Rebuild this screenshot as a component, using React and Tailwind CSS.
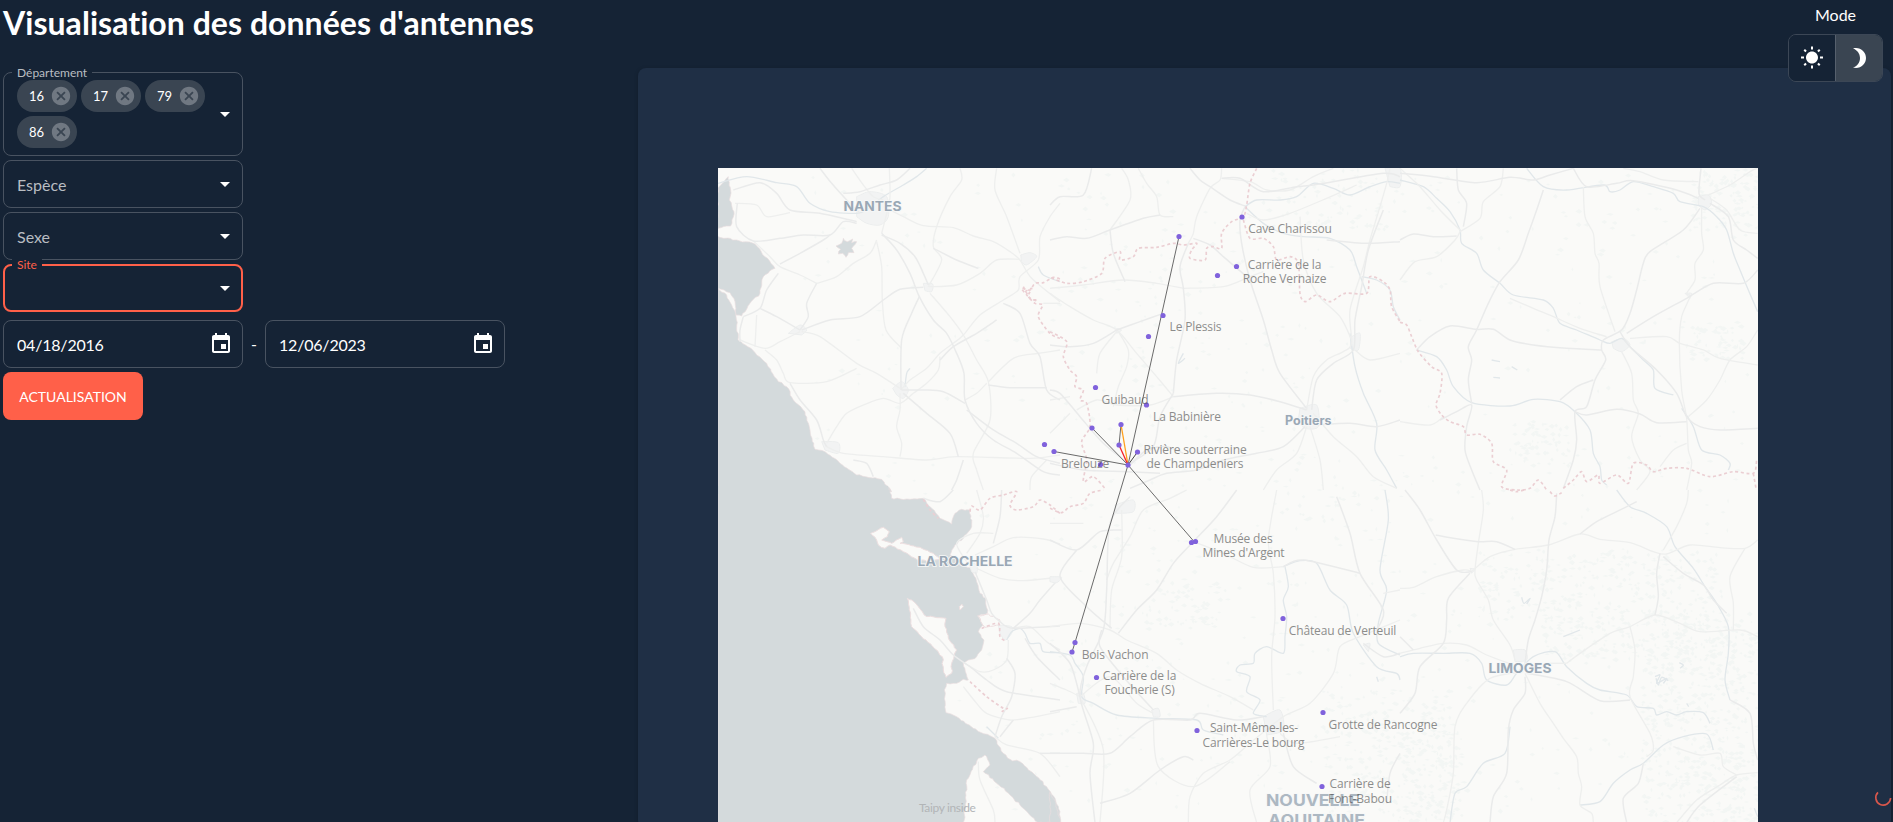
import React from "react";

const ICONS = {
  arrow: "M7 10l5 5 5-5z",
  cancel:
    "M12 2C6.47 2 2 6.47 2 12s4.47 10 10 10 10-4.47 10-10S17.53 2 12 2zm5 13.59L15.59 17 12 13.41 8.41 17 7 15.59 10.59 12 7 8.41 8.41 7 12 10.59 15.59 7 17 8.41 13.41 12 17 15.59z",
  event:
    "M17 12h-5v5h5v-5zM16 1v2H8V1H6v2H5c-1.11 0-1.99.9-1.99 2L3 19c0 1.1.89 2 2 2h14c1.1 0 2-.9 2-2V5c0-1.1-.9-2-2-2h-1V1h-2zm3 18H5V8h14v11z",
  sun: "M6.76 4.84l-1.8-1.79-1.41 1.41 1.79 1.79 1.42-1.41zM4 10.5H1v2h3v-2zm9-9.95h-2V3.5h2V.55zm7.45 3.91l-1.41-1.41-1.79 1.79 1.41 1.41 1.79-1.79zm-3.21 13.7l1.79 1.8 1.41-1.41-1.8-1.79-1.4 1.4zM20 10.5v2h3v-2h-3zm-8-5c-3.31 0-6 2.69-6 6s2.69 6 6 6 6-2.69 6-6-2.69-6-6-6zm-1 16.95h2V19.5h-2v2.95zm-7.45-3.91l1.41 1.41 1.79-1.8-1.41-1.41-1.79 1.8z",
  moon: "M9 2c-1.05 0-2.05.16-3 .46 4.06 1.27 7 5.06 7 9.54 0 4.48-2.94 8.27-7 9.54.95.3 1.95.46 3 .46 5.52 0 10-4.48 10-10S14.52 2 9 2z",
};

function Icon({ name, className = "size-6" }) {
  return (
    <svg viewBox="0 0 24 24" fill="currentColor" className={`shrink-0 ${className}`}>
      <path d={ICONS[name]} />
    </svg>
  );
}

function Chip({ children }) {
  return (
    <div className="flex h-8 w-[60px] items-center justify-between rounded-full bg-[#3a4552] pl-3 pr-[5px] text-[13px]">
      <span className="pt-px">{children}</span>
      <Icon name="cancel" className="size-[22px] text-[#707882]" />
    </div>
  );
}

function Select({ label, floating, focused, chips }) {
  return (
    <div
      className={`relative flex w-60 items-center rounded-lg ${
        focused ? "border-2 border-[#ff6049] pl-3 pr-1" : "border border-[#495361] pl-[13px] pr-[5px]"
      } ${chips ? "h-[84px]" : "h-12"}`}
    >
      {floating && (
        <span
          className={`absolute bg-[#152335] px-[5px] text-[12px] leading-3 ${
            focused ? "-top-[7px] left-[7px] text-[#ff6049]" : "-top-[6px] left-[8px] text-[#b9bdc2]"
          }`}
        >
          {label}
        </span>
      )}
      <div className="flex flex-1 flex-wrap gap-1 text-base">
        {chips && chips.map((c) => <Chip key={c}>{c}</Chip>)}
        {!floating && <span className="pt-px text-[#b9bdc2]">{label}</span>}
      </div>
      <Icon name="arrow" />
    </div>
  );
}

function DateField({ value }) {
  return (
    <div className="flex h-12 w-60 items-center justify-between rounded-lg border border-[#495361] pl-[13px] pr-[9px] text-base">
      <span className="pt-px tracking-[-0.2px]">{value}</span>
      <Icon name="event" />
    </div>
  );
}

/* Catmull-Rom curve through a list of "x,y" pairs. */
function curve(s) {
  const p = s.trim().split(/\s+/).map((q) => q.split(",").map(Number));
  let d = `M${p[0]}`;
  for (let i = 0; i < p.length - 1; i++) {
    const a = p[i - 1] || p[i];
    const b = p[i];
    const c = p[i + 1];
    const e = p[i + 2] || c;
    d += `C${b[0] + (c[0] - a[0]) / 7},${b[1] + (c[1] - a[1]) / 7} ${c[0] - (e[0] - b[0]) / 7},${c[1] - (e[1] - b[1]) / 7} ${c}`;
  }
  return d;
}

function rng(seed) {
  let s = seed;
  return () => {
    s = (s * 1664525 + 1013904223) % 4294967296;
    return s / 4294967296;
  };
}

/* Closed outline with small irregular notches, for coasts. */
function coast(s) {
  const r = rng(5);
  const p = s.trim().split(/\s+/).map((q) => q.split(",").map(Number));
  let d = `M${p[0]}`;
  for (let i = 0; i < p.length; i++) {
    const a = p[i];
    const b = p[(i + 1) % p.length];
    const len = Math.hypot(b[0] - a[0], b[1] - a[1]);
    const n = len > 130 ? 1 : Math.max(1, Math.round(len / 9));
    for (let k = 1; k <= n; k++) {
      const j = k === n ? 0 : 5;
      d += `L${(a[0] + ((b[0] - a[0]) * k) / n + (r() - 0.5) * j).toFixed(1)},${(a[1] + ((b[1] - a[1]) * k) / n + (r() - 0.5) * j).toFixed(1)}`;
    }
  }
  return d + "Z";
}

/* Small woodland flecks: [x, y, w, h, count] areas in page pixels. */
const WOODS = [
  [800, 172, 500, 640, 330],
  [1060, 172, 690, 640, 600],
  [1270, 170, 130, 60, 90],
  [1300, 480, 100, 60, 30],
  [1690, 170, 68, 60, 130],
  [1320, 690, 130, 132, 320],
  [1400, 730, 60, 90, 120],
  [1540, 550, 180, 110, 400],
  [1640, 610, 118, 130, 350],
  [1640, 740, 118, 82, 250],
  [1680, 320, 60, 40, 70],
  [1510, 420, 60, 50, 70],
  [1475, 550, 70, 70, 80],
  [1140, 580, 80, 50, 60],
];
const SPECKS = (() => {
  const r = rng(17);
  let d = "";
  WOODS.forEach(([x, y, w, h, n]) => {
    for (let i = 0; i < n; i++) {
      const px = x + r() * w;
      const py = y + r() * h;
      const a = 1 + r() * 3.2;
      const b = 0.8 + r() * 1.8;
      d += `M${px.toFixed(1)},${py.toFixed(1)}l${a.toFixed(1)},${(-b).toFixed(1)}l${(a * 0.8).toFixed(1)},${b.toFixed(1)}l${(-a * 0.7).toFixed(1)},${b.toFixed(1)}z`;
    }
  });
  return d;
})();

/* Every tile holds its geometry at three units per page pixel. */
const TILES = [
  {
    at: [710, 160],
    water: [
      "24,84 55,50 62,90 58,120 72,155 62,198 24,205",
      "24,230 80,240 135,252 165,290 195,325 160,350 150,400 120,430 95,468 78,465 75,425 60,398 24,385",
      "24,385 50,405 65,435 78,470 84,540 130,572 170,610 205,665 230,680 250,720 285,755 300,810 315,868 345,875 390,910 440,945 515,958 545,995 24,995",
      "378,258 395,250 400,235 412,245 428,237 425,248 440,245 425,265 432,278 415,278 408,292 398,280 385,282 392,268",
    ],
    town: [
      "440,110 480,95 530,110 535,170 510,195 470,190 440,170",
      "932,285 960,278 980,290 950,315 935,305",
      "548,685 575,665 595,690 580,715 560,705",
      "235,520 270,495 290,510 275,525",
      "640,370 668,372 665,395 645,392",
      "335,845 385,848 385,880 345,870",
    ],
    road: [
      "330,25 365,70 410,120 450,160", "425,25 460,75 490,110 520,120",
      "400,100 450,95 510,75 560,60 600,25", "538,25 540,110 530,160 515,220",
      "515,220 560,270 600,340 628,410 670,480 710,520 740,580 762,640 765,720 800,790 850,840 920,880 1000,935 1050,945",
      "520,140 580,170 640,197 730,203 790,228 850,245 900,275 930,300 965,355 1050,425",
      "515,225 570,250 615,290 640,340 655,375",
      "500,245 515,320 517,420 528,510 575,565",
      "628,410 605,460 575,540 573,690",
      "573,690 600,660 650,625 690,580 730,550 760,525 810,465 880,420 925,390 930,350 985,300 990,230 1020,170 1050,130",
      "70,90 150,68 200,100 240,150 330,160 440,185", "75,130 140,135 170,170 240,158",
      "440,190 400,185 360,225 280,225 210,235 130,243 80,200 82,130",
      "130,243 180,290 210,320 270,345 320,370", "210,312 270,280 340,240 360,225",
      "320,370 380,350 430,310 480,280 500,240", "320,370 290,430 295,470 270,510",
      "275,515 330,530 440,610 500,640 570,685", "275,510 360,480 450,470 520,420 570,388 640,382",
      "655,380 740,375 810,340 860,300 930,298", "670,265 740,300 805,325", "655,380 695,300 670,260 680,200 720,110 755,60 750,25",
      "150,445 200,470 270,510", "270,515 210,545 165,565 90,540", "100,470 90,510 90,545", "140,465 135,560",
      "205,340 170,390 150,445 100,470", "165,570 200,600 220,640 240,668 350,665 440,625",
      "240,670 270,720 320,780 340,840 350,860", "350,850 380,800 410,760 460,735 520,715 570,730 610,700 650,670 685,630 690,590",
      "575,690 640,690 700,695 765,730", "570,700 570,750 560,800 575,850 570,890", "580,700 650,760 720,820 745,890",
      "350,860 400,880 520,890 650,900 740,890 960,895 1050,885", "430,900 470,910 490,950",
      "660,400 720,470 760,525 800,600 835,665 840,780 790,880 800,930 820,990",
      "880,430 930,460 960,550 990,590 1010,690 1050,720", "835,665 910,595 985,580 1050,570",
      "835,675 900,683 1010,683", "765,720 800,700 830,670", "770,750 850,810 920,850 980,890 1050,910",
      "860,25 855,90 890,170 930,280", "760,900 740,960 725,990", "960,990 965,950 1010,900", "860,480 800,520 730,560 690,600", "1050,430 1000,430",
    ],
    river: ["24,70 110,50 200,68 260,80 300,130 360,155 440,160 470,150 520,110 580,75 620,50 650,25", "585,680 590,640 600,625", "985,320 1000,345 1050,365"],
    border: ["1050,357 1030,352 1000,368 975,370 960,390 935,385 950,405 975,430 998,435 985,470 1020,520 1050,535", "940,380 960,415 980,420", "945,395 965,385 955,410 985,425"],
  },
  {
    at: [1050, 160],
    town: ["750,745 800,735 805,800 765,805 745,780", "1005,25 1050,25 1050,80 1020,80", "905,530 930,520 925,570 900,565", "200,505 215,510 200,520"],
    road: [
      "0,135 30,110 100,105 125,25", "265,25 290,70 320,110 330,165 370,170", "420,25 450,60 480,80 540,120 585,138",
      "515,55 600,65 650,90 720,90 790,50 850,25", "515,55 570,55 640,95 740,80 790,75 1000,40 1050,50", "515,25 510,60 480,85 440,170 430,220 415,250",
      "0,240 50,230 110,235 180,210 280,175 330,165", "180,210 240,120 235,60 215,25", "180,210 190,280 225,365",
      "0,385 100,375 220,360 320,370 400,385", "585,140 570,180 575,250 600,360 640,480 665,570 690,640 770,745",
      "590,160 640,180 720,160 830,115 920,75", "415,250 390,320 400,385 405,480 380,600 370,700",
      "400,385 520,380 600,350 640,335", "430,235 480,255 520,290 590,350", "0,400 60,440 130,480 200,510 260,580 320,650 370,710",
      "200,510 130,550 60,560 0,555", "200,515 150,580 140,640", "200,510 270,485 340,460", "205,515 235,570 230,620 205,680 190,740",
      "370,710 500,700 600,705 690,725 770,750", "370,710 300,735 200,735 140,720 80,750", "370,700 330,770 310,860 240,910",
      "770,750 790,650 830,600 880,575 905,550 900,450 940,320 960,240 990,140 1010,70 1020,25", "785,750 800,660 850,610 910,570 915,480 935,380 955,270 1000,150",
      "750,170 760,300 800,400 870,470 905,540", "830,240 950,250 1050,245", "790,760 850,830 920,890 970,950 1040,985", "800,795 900,790 980,800 1050,780",
      "770,800 740,880 680,930 640,990", "765,800 700,860 620,880 520,900 440,930 350,940 300,960 240,985", "780,800 810,900 820,990",
      "0,910 100,930 230,935 330,940", "60,710 0,720", "240,915 290,870 350,860 400,880", "0,820 60,760", "240,915 160,850 90,770 30,700 0,690", "915,570 960,600 1050,580",
    ],
    river: [
      "1050,70 1010,65 960,80 900,105 850,85 790,70 740,110 690,120 620,120 585,140",
      "585,140 640,190 700,220 760,230 840,235 900,270 920,320 950,400", "900,520 915,620 940,700 980,790 975,870 1010,930 1040,985", "400,580 385,610 405,595", "935,350 980,360 1020,390 1030,440 1050,480",
    ],
    border: [
      "620,25 600,70 590,135 580,170 545,185 515,220 515,265 490,260 470,265 465,300 420,295 425,270 440,250 400,255 370,250 320,262 265,265 250,290 210,300 210,275 165,295 155,340 100,365 50,370 0,352",
      "580,180 600,235 640,235 670,260 680,300 720,290 745,310 750,400 765,425 800,405 840,425 885,400 950,400 960,350 1000,365 1020,390 1025,440 1050,485",
      "0,515 50,545 40,590 60,630 80,650 75,680 100,690 90,720 110,730 120,800 95,845 110,900 100,965 130,950 165,985",
    ],
  },
  {
    at: [1400, 160],
    town: ["635,545 670,535 690,555 665,575 640,565", "895,110 925,105 935,130 915,150 895,135", "855,400 875,400 870,415"],
    road: [
      "0,40 100,50 230,68 330,52 400,60 450,45 520,25", "0,25 60,80 120,150 180,210", "170,25 175,90 200,130 190,200",
      "310,25 300,80 250,125 240,175 180,215", "0,240 40,222 100,230 170,228", "0,360 45,305 110,290 165,240 180,215",
      "430,90 410,150 385,220 355,300 300,365 265,430 230,510 205,560 215,600 205,660 215,730",
      "550,80 555,170 580,220 585,280 597,310 600,380 645,515", "520,25 560,80 650,70 700,62 830,90 895,115",
      "670,25 720,35 790,60 895,65", "903,25 897,100 915,120", "925,105 990,75 1050,35 1073,25",
      "900,145 850,210 750,275 730,310 710,390 690,460 665,510 610,540 605,570 617,600 585,660 560,740 525,755 530,840 520,900 490,985",
      "905,140 905,220 910,270 885,310 885,360 860,400 870,410 845,470 838,550 845,690 860,775 865,870 875,910 860,990",
      "680,520 760,470 860,415 940,370 1030,370 1073,330", "690,535 800,530 840,550 910,570 960,595 1073,615",
      "930,130 985,170 1000,240 1040,270 1073,295", "930,115 980,150 1020,210 1073,220", "50,570 90,530 150,498 230,508 280,508 330,540 400,555 500,565 605,570",
      "330,415 400,445 460,470 540,505 620,530", "660,515 690,560 770,630 830,700 860,770 900,800 960,810 1073,805",
      "665,575 695,640 700,720 715,760 695,830 720,900 750,935 710,990", "525,755 560,765 650,748 720,762 770,788 860,785",
      "865,770 920,720 960,660 990,600 1040,560 1073,510", "120,780 170,755 215,735 200,800 195,870 215,930 240,990", "0,785 90,795 130,770", "480,720 530,680 580,660", "860,850 820,870 780,920",
    ],
    river: [
      "0,60 70,80 110,115 150,155 180,210 185,250 230,280 250,330 300,370 340,405 430,420 460,445 480,490 530,510 600,540 630,550 665,535 690,560 730,600 760,630 765,685 820,705",
      "380,25 430,80 500,90 610,75 630,95 660,90 700,65 760,80 820,100 840,125 910,140 950,170 980,210 1000,280 1020,330 1045,390 1073,455",
      "50,570 110,590 140,630 160,680 215,728 330,738 400,718 480,725 525,755 570,810 580,880 600,920 605,960 620,975",
      "845,745 880,800 905,870 960,885 990,910 985,930", "275,600 300,605", "335,620 352,630", "280,652 300,654",
    ],
    border: [
      "0,487 20,495 35,530 55,575 95,620 125,640 120,700 108,735 125,765 150,785 190,800 200,825 240,823 275,850 280,905 320,930 305,980 350,990 390,985 415,960 440,990",
      "490,985 520,960 545,935 560,965 595,945 600,970 650,945 685,970 700,910 740,915 760,935 800,925 860,925 930,950 1000,935 1060,940 1070,900", "1060,940 1068,985",
    ],
  },
  {
    at: [710, 490],
    water: [
      "24,-3 540,-3 545,25 600,28 640,25 665,55 690,85 725,102 735,70 755,58 780,60 785,110 760,145 735,165 720,195 760,220 785,240 800,275 810,310 828,325 832,370 805,378 820,405 805,425 822,450 815,480 800,500 760,520 775,570 760,568 740,580 710,580 703,600 708,668 740,680 790,715 855,745 880,790 900,808 930,815 970,850 1010,890 1035,925 1050,965 1050,998 985,998 930,945 900,915 860,880 820,845 840,825 825,795 805,805 770,870 765,960 760,998 24,998",
    ],
    land: [
      "482,130 520,112 538,125 532,140 515,150 545,160 575,142 580,155 570,160 630,172 670,190 690,205 660,215 620,208 580,185 540,165 525,175 505,165 500,150",
      "592,325 605,330 625,350 650,380 708,385 705,410 715,445 740,480 725,520 725,550 708,562 700,540 697,500 680,480 635,440 605,410 602,370",
      "803,378 835,372 870,390 865,405 825,412", "748,350 756,343 760,350 750,360",
    ],
    town: ["775,215 800,225 800,250 785,245", "865,405 905,410 905,430 885,450 870,430"],
    road: [
      "640,25 690,35 730,0", "800,0 820,80 810,130 770,190", "875,0 870,80 850,160", "795,195 850,170 910,143 1000,147 1050,162",
      "795,245 830,330 845,370 870,395 910,415 1050,408", "800,235 870,265 940,272 1050,262", "1050,262 990,330 960,370 910,415",
      "770,215 740,160 790,130 850,130", "610,355 640,410 690,450 730,495 780,530 830,570 890,605 1050,630", "765,520 810,545 850,540 890,510 895,450",
      "890,505 915,550 905,620 875,680 855,740", "760,590 800,640 830,670 900,690 960,683 1050,665", "870,740 910,690", "855,740 890,765 990,790 1050,860", "945,445 980,500 1050,570",
      "805,815 810,870 850,960 855,998", "990,790 1050,790", "910,415 960,410 1010,455 1050,480",
    ],
    river: ["890,450 905,425 930,415 945,430 960,460 990,460 1000,485 1050,488", "830,710 865,745"],
    border: ["780,65 785,48 810,60 840,25 880,15 920,5 900,45 920,60 970,50 990,30 1020,45 1050,70", "640,28 660,60 685,85", "780,575 830,620 880,655 892,655 875,665", "815,415 865,400 870,440 890,455"],
  },
  {
    at: [1050, 490],
    water: ["0,905 18,940 32,998 0,998"],
    town: ["195,45 250,30 250,65 200,70", "80,610 100,610 105,640 85,640", "305,660 325,655 330,680 310,680", "640,680 690,660 700,720 650,735", "0,260 35,262 20,278 0,275", "940,465 960,460 955,485"],
    road: [
      "240,20 180,100 170,300 160,420 110,530 90,620 130,760 120,850 135,998", "215,60 215,200 185,300 180,415", "0,150 80,180 150,125 215,120",
      "410,0 360,25 280,60 240,140 190,220 170,270", "80,180 30,260 110,350 185,415", "0,410 90,400 180,420 230,450 320,490 380,540 450,580 540,620 610,660",
      "560,0 500,80 430,155 370,220 320,300 260,360 205,430", "430,155 520,190 610,232 700,230", "700,230 760,210 930,250",
      "680,0 655,150 670,250 675,380 665,500 670,660", "860,20 900,130 930,250 1000,360 980,420", "1050,390 930,440 870,470 850,550 780,640 700,680 600,760 540,810 460,850 420,920 415,998",
      "0,460 60,520 90,620", "0,580 50,600 90,620", "0,665 80,650", "90,620 180,560 260,640 310,670", "155,420 150,470 220,560 310,660", "95,630 160,780 150,998",
      "0,790 100,790 180,790 240,740 310,690 420,690 450,670 560,690 640,680", "310,690 325,830 430,890 540,815", "150,940 240,910 330,840 400,800 430,810",
      "650,735 660,830 600,900 620,998", "700,730 730,830 800,880", "690,730 740,760 870,740", "1050,790 1020,850 1010,940", "0,100 100,100", "940,460 1000,500 1050,490", "1050,300 1000,310",
    ],
    river: [
      "1005,0 1015,90 990,240 1010,300 985,400 985,460 1050,495",
      "705,230 715,290 700,330 710,380 705,440 700,490 650,470 615,490 610,520 570,525 560,545 600,560 590,605 630,630 610,670 650,680",
      "700,230 750,212 800,220 840,300 890,345 910,430 980,530 1040,550 1050,570", "0,485 60,495 75,520 100,560 95,620 130,640 200,675 320,685 440,690 460,720 520,735", "980,560 985,575",
    ],
    border: ["0,55 35,68 60,50 100,40 120,10 160,0"],
  },
  {
    at: [1400, 490],
    town: ["340,480 375,480 380,510 345,515", "210,235 225,238 215,250"],
    road: [
      "15,0 60,60 110,150 170,240 215,245", "245,0 250,60 235,160 225,240 230,270 265,330 280,390 330,465 345,510",
      "107,135 160,145 235,155 290,155 345,178", "215,245 270,200 345,178 445,165 540,132 600,148 690,158 760,185 800,192 870,165 960,173 1035,175 1073,150",
      "540,132 590,95 650,65 710,35", "865,0 860,40 830,110 790,180", "470,10 465,80 447,150 440,240 425,320 405,390 385,450 375,520",
      "215,245 190,240 110,260 40,292 0,295", "210,250 145,325 140,390 130,460 60,530 45,610 0,670", "0,490 60,475 130,460 200,465 260,495 340,525",
      "0,440 40,480", "375,550 420,640 460,700 490,745 530,800 535,850 545,890 540,945 575,970 580,998", "375,560 375,610 340,660 325,720 320,850 280,920 270,998",
      "370,545 270,565 200,640 165,710 160,850 140,960 130,998", "380,550 500,575 600,632 690,630", "500,520 540,490 630,430 690,410 765,375 840,400 900,425 1020,420 1073,440",
      "780,190 770,250 775,320 765,375", "690,410 705,480 700,560 690,620 750,730 760,780 740,800", "790,200 850,250 910,285 940,330 980,370", "1035,175 990,260 1000,340 1000,420",
      "990,630 1050,670 1060,760 1073,810", "830,998 890,930 960,885 1010,855 1073,848", "860,998 900,945 1010,860", "820,770 900,795 960,790 970,830 1010,855", "730,820 715,880 670,925 680,998", "450,520 500,520",
    ],
    river: [
      "650,0 690,50 740,70 800,110 825,170 880,235 915,290 950,340 985,410 985,490 975,570 990,630",
      "0,500 40,490 130,490 210,490 245,520 260,570 320,585 350,550 400,500 465,485 500,530 560,580 600,600 680,615 710,650 760,655 770,675 800,665 830,675 860,665 910,668 930,700",
      "540,945 600,935 640,880 690,840 730,820 790,765 850,740 920,732 940,780", "330,710 315,790 250,820 200,890 165,910 150,998", "365,322 372,340 390,325 380,342", "765,560 780,555 770,580 800,565 790,580", "768,565 775,585 785,562 805,572", "838,518 850,525 840,535", "490,440 540,420", "860,640 866,650", "1063,955 1073,980",
    ],
    border: ["330,0 350,5 372,0", "450,5 465,18 485,8"],
  },
];

const SITES = [
  [1242, 217], [1179, 236.5], [1236.5, 266.5], [1217.5, 275.5], [1163, 315.5], [1148.5, 336.5],
  [1095.5, 387.5], [1146.5, 405], [1092, 428], [1121, 424.5], [1119, 445], [1137.5, 452],
  [1128, 465], [1100.5, 464.5], [1054, 451.5], [1044.5, 444.5], [1191.5, 542.5], [1195.5, 541.5],
  [1283, 618.5], [1075, 642.5], [1072, 652], [1096.5, 677.5], [1197, 730.5], [1323, 712.5], [1322, 786.5],
];

const HUB = [1128, 465];
const LINKS = [
  [HUB, [1179, 236.5], "#6a6a6a"],
  [HUB, [1092, 428], "#6a6a6a"],
  [HUB, [1054, 451.5], "#6a6a6a"],
  [HUB, [1137.5, 452], "#444444"],
  [HUB, [1194, 541.5], "#6a6a6a"],
  [HUB, [1075, 642.5], "#6a6a6a"],
  [[1075, 642.5], [1072, 652], "#6a6a6a"],
  [[1121, 424.5], [1119, 445], "#6a6a6a"],
];

/* [text, centre x, baseline y] */
const LABELS = [
  ["Cave Charissou", 1290, 233],
  ["Carrière de la", 1284.5, 268.5], ["Roche Vernaize", 1284.5, 283],
  ["Le Plessis", 1195.5, 331],
  ["Guibaud", 1125, 403.5],
  ["La Babinière", 1187, 421],
  ["Rivière souterraine", 1195, 454], ["de Champdeniers", 1195, 468],
  ["Brelouze", 1085, 467.5],
  ["Musée des", 1243, 543], ["Mines d'Argent", 1243.5, 557],
  ["Château de Verteuil", 1342.5, 634.5],
  ["Bois Vachon", 1115, 658.5],
  ["Carrière de la", 1139.5, 679.5], ["Foucherie (S)", 1139.5, 694],
  ["Saint-Même-les-", 1254, 732], ["Carrières-Le bourg", 1253.5, 746.5],
  ["Grotte de Rancogne", 1383, 728.5],
  ["Carrière de", 1360, 788], ["Font-Babou", 1360, 802.5],
];

/* [text, left x, baseline y, width, font size, opacity] */
const CITIES = [
  ["NANTES", 843.5, 211, 58, 13, 1],
  ["LA ROCHELLE", 917.5, 566, 95, 13, 1],
  ["Poitiers", 1285, 425, 46.5, 12.5, 1],
  ["LIMOGES", 1488.5, 673, 63, 13.2, 1],
  ["NOUVELLE", 1266, 806, 94, 15.5, 0.8],
  ["AQUITAINE", 1268, 825.5, 97, 15.5, 0.8],
];

const poly = (s) => curve(s) + "Z";

function MapTile({ tile, layer }) {
  const t = tile;
  const line = (list, extra) =>
    (list || []).map((s, i) => <path key={i} d={curve(s)} fill="none" strokeLinejoin="round" {...extra} />);
  return (
    <g transform={`translate(${t.at[0]} ${t.at[1]}) scale(0.33333)`}>
      {layer === 0 && (
        <>
          {(t.water || []).map((s, i) => (
            <path key={i} d={coast(s)} fill="#d4dadc" stroke="#eadedf" strokeWidth="2" />
          ))}
          {(t.land || []).map((s, i) => (
            <path key={i} d={coast(s)} fill="#fafaf8" stroke="#eddfe0" strokeWidth="3" />
          ))}
        </>
      )}
      {layer === 1 && (
        <>
          {(t.town || []).map((s, i) => (
            <path key={i} d={poly(s)} fill="#f2f3f3" stroke="#eceeee" strokeWidth="3" />
          ))}
          {line(t.river, { stroke: "#e1e7ea", strokeWidth: 4 })}
          {line((t.road || []).filter((_, i) => i % 2), { stroke: "#eeefee", strokeWidth: 4 })}
          {line((t.road || []).filter((_, i) => !(i % 2)), { stroke: "#eaebeb", strokeWidth: 4.5 })}
          {line(t.border, { stroke: "#ebcfd3", strokeWidth: 5, strokeDasharray: "9 8" })}
        </>
      )}
    </g>
  );
}

function AntennaMap() {
  return (
    <svg viewBox="718 168 1040 654" className="block h-[654px] w-[1040px] bg-[#fafaf8]">
      <path d={SPECKS} fill="#f3f6f4" />
      {TILES.map((t, i) => <MapTile key={i} tile={t} layer={0} />)}
      <rect x="718" y="486" width="170" height="8" fill="#d4dadc" />
      {TILES.map((t, i) => <MapTile key={i} tile={t} layer={1} />)}
      <g fontFamily="Inter, sans-serif" fontWeight="700" fill="#9aa8b5" stroke="#f7f8f8" strokeWidth="1.6" style={{ paintOrder: "stroke" }}>
        {CITIES.map(([s, x, y, w, size, o]) => (
          <text key={s} x={x} y={y} textLength={w} lengthAdjust="spacingAndGlyphs" fontSize={size} opacity={o}>{s}</text>
        ))}
      </g>
      <g strokeWidth="1" fill="none">
        {LINKS.map(([a, b, c], i) => (
          <path key={i} d={`M${a}L${b}`} stroke={c} />
        ))}
        <path d="M1128,465L1121,424.5" stroke="#ff9f1c" strokeWidth="1.3" />
        <path d="M1128,465L1119,445" stroke="#f5202a" strokeWidth="1.3" />
      </g>
      <g fill="#8062dc">
        {SITES.map(([x, y], i) => <circle key={i} cx={x} cy={y} r="2.6" />)}
      </g>
      <g fontFamily="'Open Sans', sans-serif" fontSize="12" letterSpacing="-0.15" fill="#444444" opacity="0.6" textAnchor="middle">
        {LABELS.map(([s, x, y], i) => <text key={i} x={x} y={y}>{s}</text>)}
      </g>
    </svg>
  );
}

export default function App() {
  return (
    <div className="relative h-[822px] w-full overflow-hidden bg-[#152335] font-['Lato',sans-serif] text-white [font-variant-ligatures:none]">
      <header className="h-[68px] pl-[3px]">
        <h1 className="text-[32px] font-bold leading-[46px] tracking-[0.04px]">Visualisation des données d'antennes</h1>
      </header>

      <main className="flex">
        <aside className="w-[638px] shrink-0 pl-[3px] pt-1">
          <div className="flex flex-col gap-1">
            <Select label="Département" floating chips={["16", "17", "79", "86"]} />
            <Select label="Espèce" />
            <Select label="Sexe" />
            <Select label="Site" floating focused />
          </div>
          <div className="mt-2 flex items-center">
            <DateField value="04/18/2016" />
            <span className="w-[22px] text-center text-base">-</span>
            <DateField value="12/06/2023" />
          </div>
          <button className="mt-1 flex h-12 w-[140px] items-center justify-center rounded-lg bg-[#ff6049] pt-px text-sm">
            ACTUALISATION
          </button>
        </aside>

        <section className="h-[760px] w-[1253px] shrink-0 rounded-lg bg-[#1f2f45] pl-20 pt-[100px] shadow-[0_1px_4px_rgba(0,0,0,0.2)]">
          <AntennaMap />
        </section>
      </main>

      <div className="absolute right-[10px] top-[3px] flex flex-col items-center">
        <div className="text-base leading-6">Mode</div>
        <div className="mt-[7px] flex h-12 w-[95px] overflow-hidden rounded-lg border border-[#3c4756]">
          <button className="flex flex-1 items-center justify-center bg-[#152335]"><Icon name="sun" /></button>
          <button className="flex flex-1 items-center justify-center border-l border-[#56606d] bg-[#3a4552]"><Icon name="moon" /></button>
        </div>
      </div>

      <div className="absolute left-[919px] top-[799px] text-[12px] leading-[18px] tracking-[-0.35px] text-[#b2b5b7]">Taipy inside</div>

      <svg viewBox="0 0 20 20" className="absolute left-[1873px] top-[788px] size-5">
        <path d="M5,4.4A7.4,7.4 0 1 0 17.6,10" fill="none" stroke="#d9574c" strokeWidth="1.6" />
      </svg>
    </div>
  );
}
